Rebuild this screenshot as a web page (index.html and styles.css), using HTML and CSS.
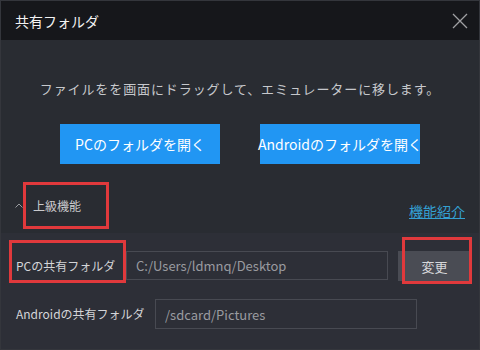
FILE: index.html
```html
<!DOCTYPE html>
<html lang="ja">
<head>
  <meta charset="UTF-8">
  <title>共有フォルダ</title>
  <link rel="stylesheet" href="styles.css">
</head>
<body>
  <div class="window">
    <div class="titlebar">
      <span class="title">共有フォルダ</span>
      <svg class="close" width="16" height="16" viewBox="0 0 16 16">
        <path d="M1 1L15 15M15 1L1 15" stroke="#a0a0a4" stroke-width="1.3" fill="none"/>
      </svg>
    </div>

    <div class="content">
      <p class="hint">ファイルをを画面にドラッグして、エミュレーターに移します。</p>
      <div class="actions">
        <button class="btn-primary">PCのフォルダを開く</button>
        <button class="btn-primary">Androidのフォルダを開く</button>
      </div>
      <div class="advanced">
        <div class="advanced-toggle">
          <svg class="chevron" width="8" height="5" viewBox="0 0 8 5">
            <path d="M0.5 4.5L4 1L7.5 4.5" stroke="#9a9ca0" stroke-width="1" fill="none"/>
          </svg>
          <span class="mark advanced-label">上級機能</span>
        </div>
        <a class="help-link" href="#">機能紹介</a>
      </div>
    </div>

    <div class="settings">
      <div class="row row-pc">
        <span class="mark field-label">PCの共有フォルダ</span>
        <input class="path" type="text" value="C:/Users/ldmnq/Desktop" readonly>
        <button class="btn-change">変更<span class="mark-over"></span></button>
      </div>
      <div class="row row-android">
        <span class="field-label plain">Androidの共有フォルダ</span>
        <input class="path" type="text" value="/sdcard/Pictures" readonly>
      </div>
    </div>
  </div>
</body>
</html>
```

FILE: styles.css
```css
* {
  box-sizing: border-box;
}
body {
  margin: 0;
  background: #292c32;
  font-family: "Noto Sans CJK JP", "Noto Sans", sans-serif;
}
.window {
  width: 480px;
  height: 350px;
  display: flex;
  flex-direction: column;
  background: #292c32;
  border: 1px solid #34363c;
}
.titlebar {
  height: 39px;
  flex: none;
  display: flex;
  align-items: center;
  justify-content: space-between;
  padding: 0 11px 0 14px;
  background: #16171b;
}
.title {
  color: #f2f2f2;
  font-size: 14px;
}
.close {
  display: block;
}
.content {
  padding-top: 39px;
}
.hint {
  margin: 0;
  text-align: center;
  color: #c6c8cc;
  font-size: 13px;
  line-height: 20px;
  letter-spacing: 0.9px;
}
.actions {
  display: flex;
  justify-content: center;
  gap: 40px;
  margin-top: 25px;
}
.btn-primary {
  width: 160px;
  height: 40px;
  padding: 0;
  border: none;
  background: #2196f3;
  color: #fff;
  font-family: inherit;
  font-size: 14px;
  white-space: nowrap;
  overflow: visible;
  display: flex;
  align-items: center;
  justify-content: center;
}
.advanced {
  display: flex;
  justify-content: space-between;
  align-items: flex-end;
  margin-top: 18px;
  padding: 0 14px;
}
.advanced-toggle {
  display: flex;
  align-items: center;
}
.mark {
  border: 3px solid #e0393c;
}
.advanced-label {
  width: 86px;
  height: 47px;
  padding: 0 7px;
  display: flex;
  align-items: center;
  color: #c9cacd;
  font-size: 12px;
}
.help-link {
  margin-bottom: 8px;
  color: #34a0d2;
  font-size: 14px;
  text-decoration: underline;
}
.settings {
  flex: 1;
  margin-top: 4px;
  padding: 7px 0 0 8px;
  background: #2d2f37;
}
.row {
  display: flex;
}
.row-pc {
  align-items: flex-start;
}
.field-label {
  color: #d4d5d8;
  font-size: 12px;
  line-height: 20px;
  white-space: nowrap;
}
.row-pc .field-label {
  width: 117px;
  height: 43px;
  padding: 13px 0 0 4px;
}
.path {
  height: 29px;
  padding: 0 9px;
  border: 1px solid #484a52;
  background: transparent;
  color: #9a9ba0;
  font-family: inherit;
  font-size: 13px;
  outline: none;
}
.row-pc .path {
  width: 262px;
  margin-top: 11px;
}
.btn-change {
  position: relative;
  width: 73px;
  height: 30px;
  margin: 11px 0 0 10px;
  padding: 0;
  border: none;
  background: #4a4c54;
  color: #d6d7da;
  font-family: inherit;
  font-size: 13px;
}
.mark-over {
  position: absolute;
  left: 4px;
  top: -14px;
  width: 70px;
  height: 47px;
  border: 3px solid #e0393c;
}
.row-android {
  align-items: center;
  margin-top: 16px;
}
.field-label.plain {
  width: 146px;
  padding-left: 7px;
}
.row-android .path {
  width: 262px;
  height: 30px;
}
```
